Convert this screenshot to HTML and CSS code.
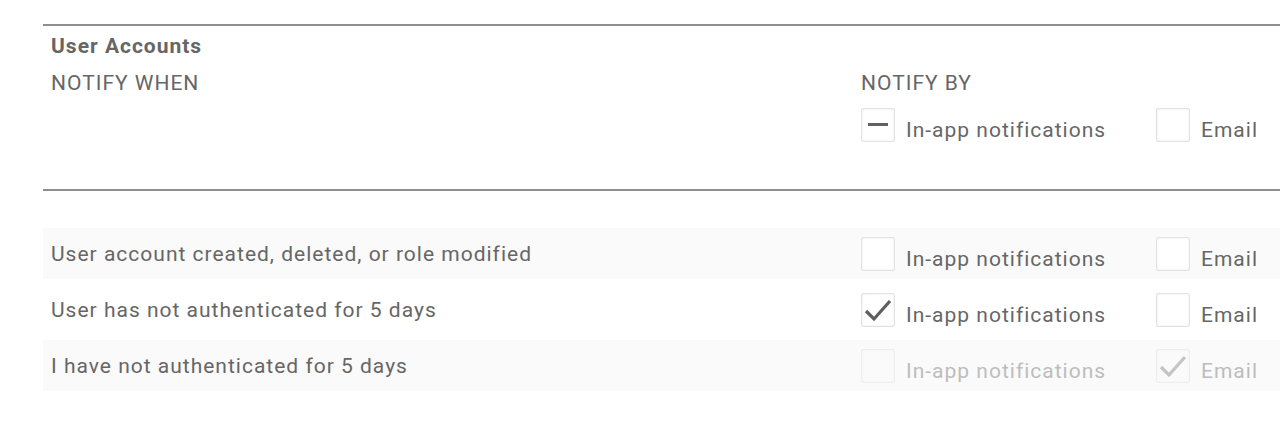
FILE: index.html
```html
<!DOCTYPE html>
<html lang="en">
<head>
    <meta charset="UTF-8">
    <meta name="viewport" content="width=device-width, initial-scale=1.0">
    <title>Notification settings</title>
    <link rel="stylesheet" href="styles.css">
</head>
<body>
    <div class="section">
        <div class="section-title">User Accounts</div>

        <!-- header: column titles + select-all boxes -->
        <div class="head">
            <div class="col-title">NOTIFY WHEN</div>
            <div class="notify-by">
                <div class="col-title">NOTIFY BY</div>
                <div class="opts">
                    <label class="opt opt-wide">
                        <span class="box">
                            <svg width="34" height="34" viewBox="0 0 34 34"><path d="M7 16.5h20" stroke="#616161" stroke-width="3"/></svg>
                        </span>
                        <span class="opt-text">In-app notifications</span>
                    </label>
                    <label class="opt">
                        <span class="box"></span>
                        <span class="opt-text">Email</span>
                    </label>
                </div>
            </div>
        </div>

        <div class="rows">
            <div class="row">
                <div class="row-label">User account created, deleted, or role modified</div>
                <label class="opt opt-wide">
                    <span class="box"></span>
                    <span class="opt-text">In-app notifications</span>
                </label>
                <label class="opt">
                    <span class="box"></span>
                    <span class="opt-text">Email</span>
                </label>
            </div>
            <div class="row">
                <div class="row-label">User has not authenticated for 5 days</div>
                <label class="opt opt-wide">
                    <span class="box">
                        <svg width="34" height="34" viewBox="0 0 34 34"><path d="M5 18l8 8L29 8" fill="none" stroke="#5f5f5f" stroke-width="3.2"/></svg>
                    </span>
                    <span class="opt-text">In-app notifications</span>
                </label>
                <label class="opt">
                    <span class="box"></span>
                    <span class="opt-text">Email</span>
                </label>
            </div>
            <div class="row disabled">
                <div class="row-label">I have not authenticated for 5 days</div>
                <label class="opt opt-wide">
                    <span class="box"></span>
                    <span class="opt-text">In-app notifications</span>
                </label>
                <label class="opt">
                    <span class="box">
                        <svg width="34" height="34" viewBox="0 0 34 34"><path d="M5 18l8 8L29 8" fill="none" stroke="#c4c4c4" stroke-width="3.2"/></svg>
                    </span>
                    <span class="opt-text">Email</span>
                </label>
            </div>
        </div>
    </div>
</body>
</html>
```

FILE: styles.css
```css
body {
    margin: 0;
    font-family: Roboto, "Liberation Sans", sans-serif;
    font-size: 21px;
    letter-spacing: 1px;
    color: #666;
    background: #fff;
}
.section {
    margin: 24px 0 0 43px;
    border-top: 2px solid #8e8e8e;
}
.section-title {
    padding: 8px 8px 0;
    font-weight: bold;
    line-height: 24px;
}
.head {
    display: flex;
    margin-top: 13px;
    padding-bottom: 47px;
    border-bottom: 2px solid #8e8e8e;
}
.head > .col-title {
    width: 810px;
    padding-left: 8px;
}
.col-title {
    line-height: 24px;
}
.opts {
    display: flex;
    margin-top: 13px;
}
.opt {
    display: flex;
    align-items: center;
    gap: 11px;
}
.opt-wide {
    width: 295px;
}
.opt-text {
    padding-top: 10px;
}
.box {
    display: block;
    width: 32px;
    height: 32px;
    border: 1px solid #e2e2e2;
    border-radius: 2px;
    box-shadow: inset 0 0 3px rgba(0,0,0,0.08);
    background: #fff;
    overflow: hidden;
}
.box svg {
    display: block;
    margin: -1px;
}
.rows {
    display: flex;
    flex-direction: column;
    gap: 5px;
    margin-top: 37px;
}
.row {
    display: flex;
    align-items: center;
    height: 51px;
}
.row:nth-child(odd) {
    background: #fafafa;
}
.row-label {
    width: 810px;
    padding-left: 8px;
}
.disabled .opt-text {
    color: #bdbdbd;
}
.disabled .box {
    border-color: #eeeeee;
    background: #fafafa;
    box-shadow: inset 0 0 3px rgba(0,0,0,0.04);
}
```
